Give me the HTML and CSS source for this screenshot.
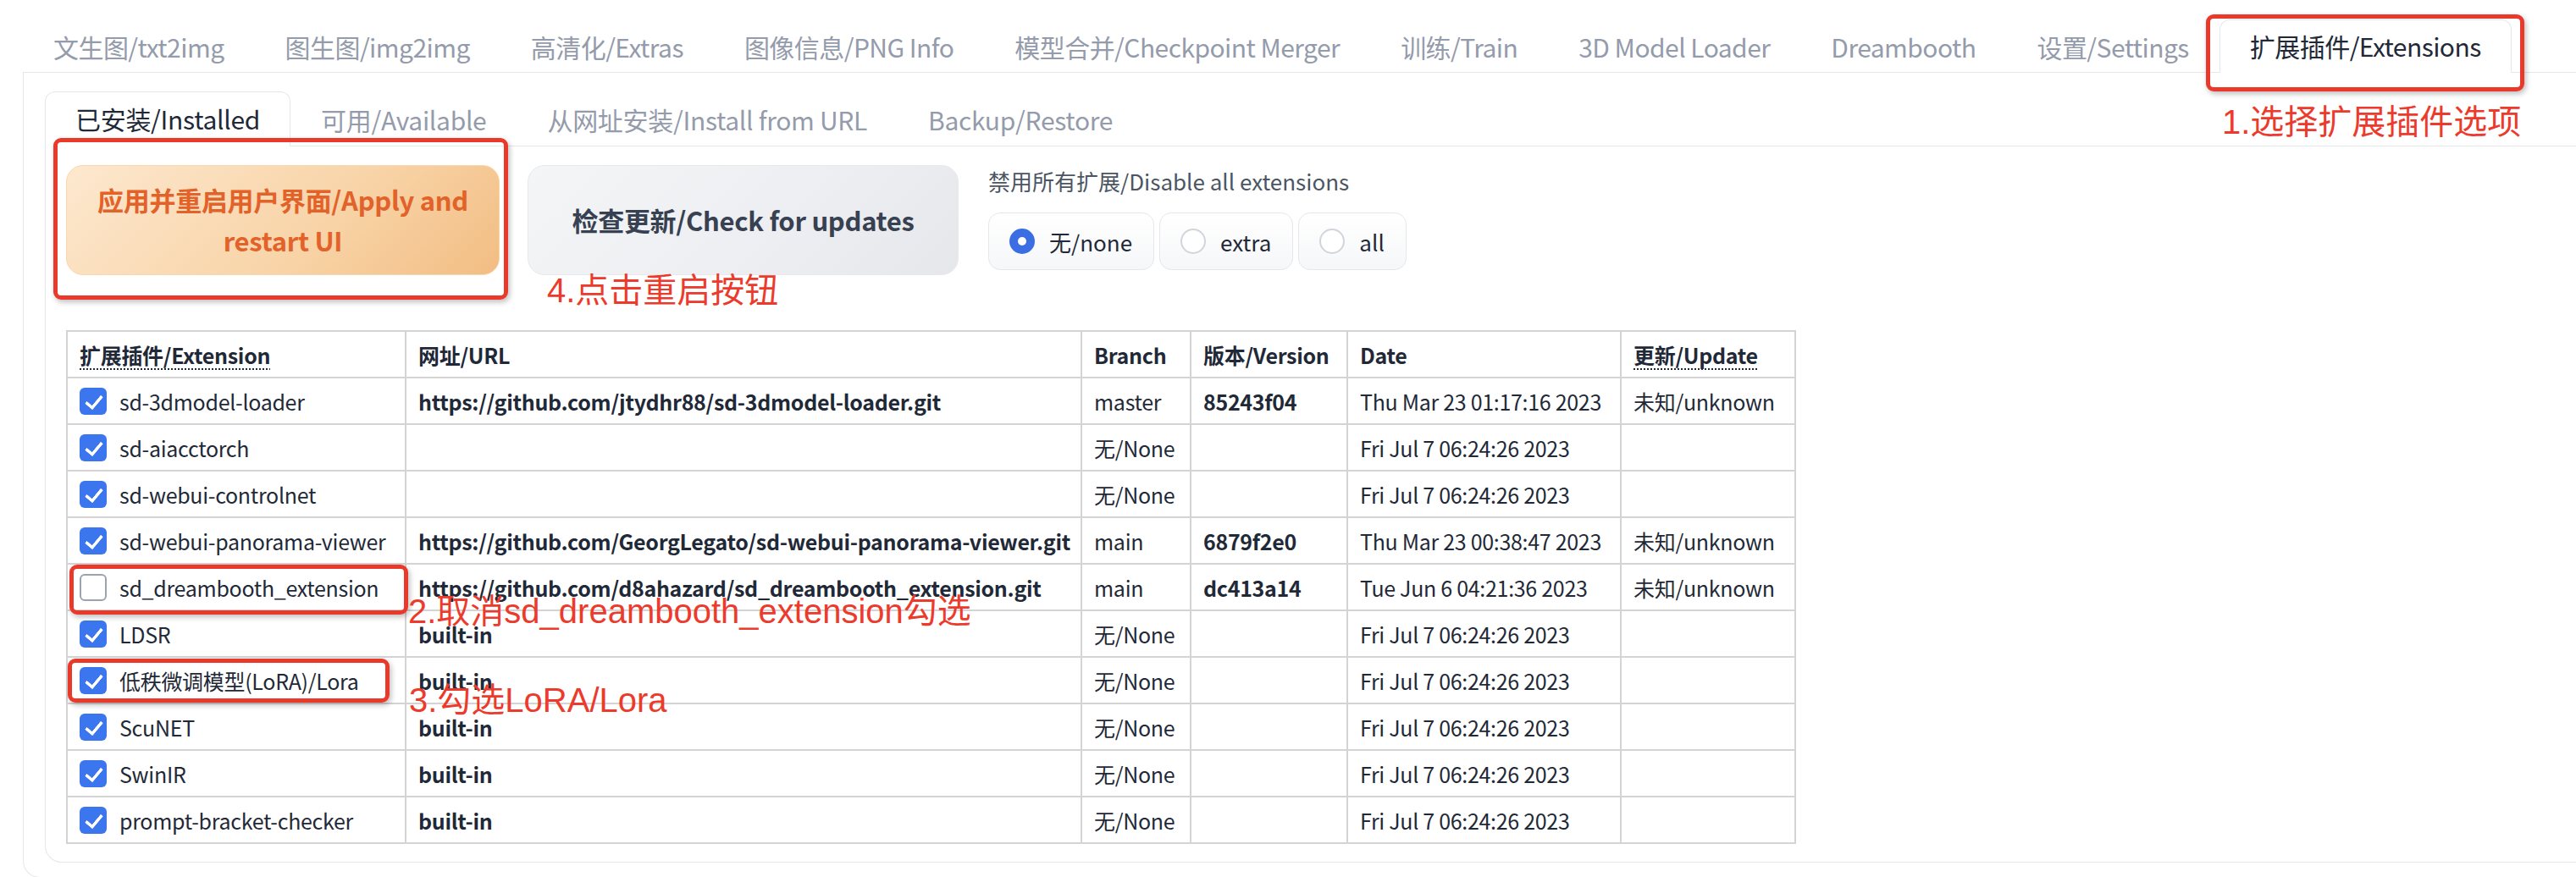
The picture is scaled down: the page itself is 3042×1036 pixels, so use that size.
FILE: index.html
```html
<!DOCTYPE html>
<html lang="zh">
<head>
<meta charset="utf-8">
<title>Extensions</title>
<link rel="stylesheet" href="styles.css">
</head>
<body>
<div class="page">
  <div class="app">
    <div class="tabnav">
      <div class="tab">文生图/txt2img</div>
      <div class="tab">图生图/img2img</div>
      <div class="tab">高清化/Extras</div>
      <div class="tab">图像信息/PNG Info</div>
      <div class="tab">模型合并/Checkpoint Merger</div>
      <div class="tab">训练/Train</div>
      <div class="tab">3D Model Loader</div>
      <div class="tab">Dreambooth</div>
      <div class="tab">设置/Settings</div>
      <div class="tab sel">扩展插件/Extensions</div>
    </div>
    <div class="outer">
      <div class="subnav">
        <div class="tab sel">已安装/Installed</div>
        <div class="tab">可用/Available</div>
        <div class="tab">从网址安装/Install from URL</div>
        <div class="tab">Backup/Restore</div>
      </div>
      <div class="inner">
        <div class="toprow">
          <div class="btn primary">应用并重启用户界面/Apply and<br>restart UI</div>
          <div class="btn secondary">检查更新/Check for updates</div>
          <div class="radiogroup">
            <div class="rlabel">禁用所有扩展/Disable all extensions</div>
            <div class="ropts">
              <div class="ropt"><span class="rdot on"></span>无/none</div>
              <div class="ropt"><span class="rdot"></span>extra</div>
              <div class="ropt"><span class="rdot"></span>all</div>
            </div>
          </div>
        </div>
        <table class="ext">
          <colgroup>
            <col class="c1"><col class="c2"><col class="c3"><col class="c4"><col class="c5"><col class="c6">
          </colgroup>
          <thead>
            <tr>
              <th><span class="abbr">扩展插件/Extension</span></th>
              <th>网址/URL</th>
              <th>Branch</th>
              <th>版本/Version</th>
              <th>Date</th>
              <th><span class="abbr">更新/Update</span></th>
            </tr>
          </thead>
          <tbody>
            <tr>
              <td><span class="name"><span class="cb on"></span>sd-3dmodel-loader</span></td>
              <td class="b">https://github.com/jtydhr88/sd-3dmodel-loader.git</td>
              <td>master</td>
              <td class="b">85243f04</td>
              <td>Thu Mar 23 01:17:16 2023</td>
              <td>未知/unknown</td>
            </tr>
            <tr>
              <td><span class="name"><span class="cb on"></span>sd-aiacctorch</span></td>
              <td></td>
              <td>无/None</td>
              <td></td>
              <td>Fri Jul 7 06:24:26 2023</td>
              <td></td>
            </tr>
            <tr>
              <td><span class="name"><span class="cb on"></span>sd-webui-controlnet</span></td>
              <td></td>
              <td>无/None</td>
              <td></td>
              <td>Fri Jul 7 06:24:26 2023</td>
              <td></td>
            </tr>
            <tr>
              <td><span class="name"><span class="cb on"></span>sd-webui-panorama-viewer</span></td>
              <td class="b">https://github.com/GeorgLegato/sd-webui-panorama-viewer.git</td>
              <td>main</td>
              <td class="b">6879f2e0</td>
              <td>Thu Mar 23 00:38:47 2023</td>
              <td>未知/unknown</td>
            </tr>
            <tr>
              <td><span class="name"><span class="cb"></span>sd_dreambooth_extension</span></td>
              <td class="b">https://github.com/d8ahazard/sd_dreambooth_extension.git</td>
              <td>main</td>
              <td class="b">dc413a14</td>
              <td>Tue Jun 6 04:21:36 2023</td>
              <td>未知/unknown</td>
            </tr>
            <tr>
              <td><span class="name"><span class="cb on"></span>LDSR</span></td>
              <td class="b">built-in</td>
              <td>无/None</td>
              <td></td>
              <td>Fri Jul 7 06:24:26 2023</td>
              <td></td>
            </tr>
            <tr>
              <td><span class="name"><span class="cb on"></span>低秩微调模型(LoRA)/Lora</span></td>
              <td class="b">built-in</td>
              <td>无/None</td>
              <td></td>
              <td>Fri Jul 7 06:24:26 2023</td>
              <td></td>
            </tr>
            <tr>
              <td><span class="name"><span class="cb on"></span>ScuNET</span></td>
              <td class="b">built-in</td>
              <td>无/None</td>
              <td></td>
              <td>Fri Jul 7 06:24:26 2023</td>
              <td></td>
            </tr>
            <tr>
              <td><span class="name"><span class="cb on"></span>SwinIR</span></td>
              <td class="b">built-in</td>
              <td>无/None</td>
              <td></td>
              <td>Fri Jul 7 06:24:26 2023</td>
              <td></td>
            </tr>
            <tr>
              <td><span class="name"><span class="cb on"></span>prompt-bracket-checker</span></td>
              <td class="b">built-in</td>
              <td>无/None</td>
              <td></td>
              <td>Fri Jul 7 06:24:26 2023</td>
              <td></td>
            </tr>
          </tbody>
        </table>
      </div>
    </div>
  </div>

  <div class="ann-box box1"></div>
  <div class="ann-text t1">1.选择扩展插件选项</div>
  <div class="ann-box box2"></div>
  <div class="ann-text t4">4.点击重启按钮</div>
  <div class="ann-box box3"></div>
  <div class="ann-text t2">2.取消sd_dreambooth_extension勾选</div>
  <div class="ann-box box4"></div>
  <div class="ann-text t3">3.勾选LoRA/Lora</div>
</div>
</body>
</html>
```

FILE: styles.css
```css
* { box-sizing: border-box; }
html, body { margin: 0; padding: 0; background: #ffffff; }
body {
  font-family: "Noto Sans CJK SC", "Noto Sans", sans-serif;
  color: #1f2937;
  overflow: hidden;
  width: 3042px;
  height: 1036px;
}
.page { position: relative; width: 3042px; height: 1036px; overflow: hidden; }
.app { padding-left: 27px; }

/* tabs */
.tabnav, .subnav {
  display: flex;
  align-items: flex-end;
  border-bottom: 1px solid #e5e7eb;
}
.tabnav { padding-top: 23px; }
.tab {
  height: 62px;
  line-height: 60px;
  padding: 0 35px;
  border: 1px solid transparent;
  border-bottom: none;
  font-size: 30px;
  letter-spacing: -0.3px;
  color: #949bab;
  white-space: nowrap;
  margin-bottom: -1px;
}
.tabnav .tab { letter-spacing: -0.55px; }
.tab.sel {
  color: #1f2937;
  background: #fff;
  border-color: #e5e7eb;
  border-radius: 12px 12px 0 0;
  height: 63px;
}
.subnav .tab { height: 64px; line-height: 62px; }
.subnav .tab.sel { height: 65px; }

.outer {
  border-left: 1px solid #e5e7eb;
  border-bottom: 1px solid #e5e7eb;
  border-bottom-left-radius: 20px;
  padding: 22px 0 17px 25px;
}
.inner {
  border-left: 1px solid #e5e7eb;
  border-bottom: 1px solid #e5e7eb;
  border-bottom-left-radius: 20px;
  padding: 22px 0 21px 24px;
}

/* top row */
.toprow { display: flex; align-items: flex-start; }
.btn {
  height: 130px;
  border-radius: 20px;
  display: flex;
  align-items: center;
  justify-content: center;
  text-align: center;
  font-size: 31px;
  letter-spacing: -0.3px;
  font-weight: 700;
  line-height: 48px;
}
.primary {
  width: 512px;
  margin-right: 33px;
  color: #e2622a;
  background: linear-gradient(135deg, #fde8cf 0%, #f8d3a6 60%, #f2bd83 100%);
  border: 1px solid #f9d7ad;
}
.secondary {
  width: 509px;
  color: #374151;
  background: linear-gradient(135deg, #f4f5f7 0%, #eceef1 60%, #e5e7eb 100%);
  border: 1px solid #e7e9ed;
}
.radiogroup { margin-left: 35px; }
.rlabel {
  font-size: 26px;
  line-height: 38px;
  color: #4b5563;
}
.ropts { display: flex; gap: 6px; margin-top: 18px; }
.ropt {
  height: 68px;
  display: flex;
  align-items: center;
  gap: 17px;
  padding: 0 25px 0 24px;
  border: 1px solid #e5e7eb;
  border-radius: 14px;
  background: linear-gradient(180deg, #ffffff 0%, #f6f7f9 100%);
  font-size: 26px;
  color: #1f2937;
}
.rdot {
  width: 30px; height: 30px;
  border-radius: 50%;
  border: 2px solid #d1d5db;
  background: #fff;
  flex: none;
  position: relative;
}
.rdot.on {
  border: none;
  background: #3b6ee3;
}
.rdot.on::after {
  content: "";
  position: absolute;
  left: 10px; top: 10px;
  width: 10px; height: 10px;
  border-radius: 50%;
  background: #fff;
}

/* table */
.ext {
  margin-top: 65px;
  border-collapse: collapse;
  table-layout: fixed;
  width: 2041px;
  font-size: 25px;
  letter-spacing: -0.3px;
}
.ext col.c1 { width: 400px; }
.ext col.c2 { width: 798px; }
.ext col.c3 { width: 129px; }
.ext col.c4 { width: 185px; }
.ext col.c5 { width: 323px; }
.ext col.c6 { width: 206px; }
.ext th, .ext td {
  border: 2px solid #d4d4d4;
  height: 55px;
  padding: 0 14px;
  text-align: left;
  white-space: nowrap;
  overflow: hidden;
  line-height: 34px;
  color: #1f2937;
}
.ext th { font-weight: 700; }
.ext td.b { font-weight: 700; }
.abbr {
  text-decoration: underline dotted;
  text-decoration-thickness: 2px;
  text-underline-offset: 6px;
}
.name { display: flex; align-items: center; gap: 15px; }
.cb {
  width: 32px; height: 32px;
  border-radius: 6px;
  border: 2px solid #9ca3af;
  background: #fff;
  flex: none;
  position: relative;
}
.cb.on {
  border: none;
  background: #3b76ef;
}
.cb.on::after {
  content: "";
  position: absolute;
  left: 11px; top: 5px;
  width: 8px; height: 16px;
  border: solid #fff;
  border-width: 0 4px 4px 0;
  transform: rotate(40deg);
  border-radius: 1px;
}

/* annotations */
.ann-box {
  position: absolute;
  border: 5px solid #e8392b;
  border-radius: 9px;
  box-shadow: 2px 3px 6px rgba(0, 0, 0, 0.25);
}
.box1 { left: 2605px; top: 17px; width: 376px; height: 91px; }
.box2 { left: 63px; top: 163px; width: 537px; height: 191px; }
.box3 { left: 82px; top: 667px; width: 400px; height: 59px; }
.box4 { left: 80px; top: 778px; width: 380px; height: 52px; }
.ann-text {
  position: absolute;
  font-family: "Liberation Sans", "Noto Sans CJK SC", sans-serif;
  font-size: 40px;
  line-height: 40px;
  color: #ec3a2c;
  white-space: nowrap;
}
.t1 { left: 2624px; top: 124px; }
.t4 { left: 646px; top: 323px; }
.t2 { left: 482px; top: 702px; }
.t3 { left: 483px; top: 807px; }
```
